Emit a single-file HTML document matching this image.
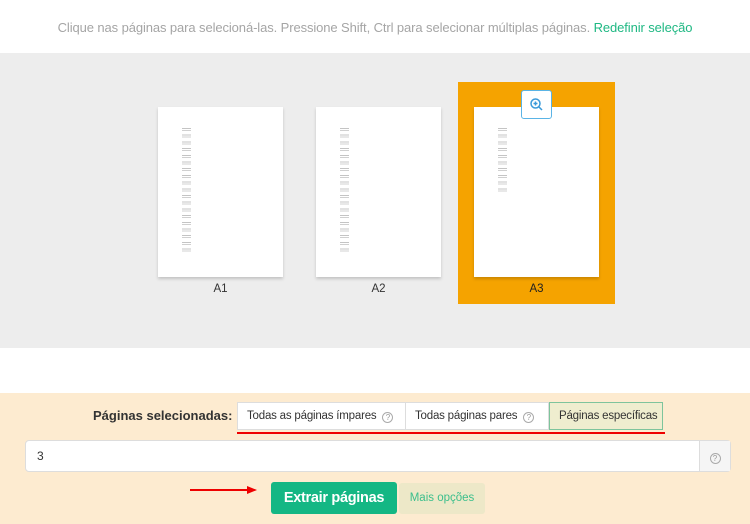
<!DOCTYPE html>
<html><head><meta charset="utf-8"><style>
*{margin:0;padding:0;box-sizing:border-box}
body{width:750px;height:524px;overflow:hidden;background:#fff;font-family:"Liberation Sans",sans-serif;position:relative}
.top{position:absolute;left:0;top:0;width:750px;height:53px;text-align:center;line-height:56px;font-size:13px;color:#a5a5a5;letter-spacing:-0.1px}
.top span{color:#1fb883}
.gray{position:absolute;left:0;top:53px;width:750px;height:295px;background:#ededed}
.page{position:absolute;top:107px;width:125px;height:170px;background:#fff;box-shadow:0 2px 3px rgba(0,0,0,.18)}
.lines{position:absolute;left:24px;top:20px;width:9px;background:repeating-linear-gradient(#fff 0,#fff 1px,#c4c4c4 1px,#c4c4c4 2px,#fff 2px,#fff 3px,#d0d0d0 3px,#d0d0d0 4px,#fff 4px,#fff 6.7px)}
.lbl{position:absolute;top:283px;width:125px;text-align:center;font-size:11.5px;color:#333}
.sel{position:absolute;left:458px;top:82px;width:157px;height:222px;background:#f5a300}
.zoom{position:absolute;left:521px;top:90px;width:31px;height:29px;background:#fff;border:1px solid #5ab4e6;border-radius:3px}
.peach{position:absolute;left:0;top:393px;width:750px;height:131px;background:#fdebd0}
.l{position:absolute;left:93px;top:408px;font-size:13px;font-weight:bold;color:#333}
.grp{position:absolute;left:237px;top:402px;height:28px;display:flex;font-size:11.5px;color:#333;letter-spacing:-0.2px}
.grp div{height:28px;line-height:27px;background:#fff;border:1px solid #ddd;padding:0 0 0 9px;white-space:nowrap}
.q{display:inline-block;width:11px;height:11px;border:1px solid #aaa;border-radius:50%;font-size:8px;line-height:9px;text-align:center;color:#999;margin-left:6px;vertical-align:-1px;letter-spacing:0}
.red{position:absolute;left:237px;top:432px;width:428px;height:2px;background:#e00}
.inp{position:absolute;left:25px;top:440px;width:706px;height:32px;background:#fff;border:1px solid #ddd;border-radius:4px;font-size:12px;line-height:31px;padding-left:11px;color:#333}
.add{position:absolute;right:0;top:0;width:31px;height:30px;background:#f5f5f5;border-left:1px solid #ddd;text-align:center}
.btn{position:absolute;left:271px;top:482px;width:126px;height:32px;background:#14b784;border-radius:3px;color:#fff;font-weight:bold;font-size:14.5px;text-align:center;line-height:32px;letter-spacing:-0.3px}
.more{position:absolute;left:399px;top:483px;width:86px;height:31px;background:#ede8c8;border-radius:3px;color:#3bbf8c;font-size:11.5px;text-align:center;line-height:31px}
</style></head><body>
<div class="top">Clique nas páginas para selecioná-las. Pressione Shift, Ctrl para selecionar múltiplas páginas. <span>Redefinir seleção</span></div>
<div class="gray"></div>
<div class="page" style="left:158px"><div class="lines" style="height:128px"></div></div>
<div class="lbl" style="left:158px">A1</div>
<div class="page" style="left:316px"><div class="lines" style="height:128px"></div></div>
<div class="lbl" style="left:316px">A2</div>
<div class="sel"></div>
<div class="page" style="left:474px"><div class="lines" style="height:67px"></div></div>
<div class="lbl" style="left:474px;color:#222">A3</div>
<div class="zoom"><svg width="29" height="27" viewBox="0 0 29 27"><circle cx="13.5" cy="12.5" r="4.5" fill="none" stroke="#3a9ad9" stroke-width="1.5"/><path d="M11.5 12.5h4M13.5 10.5v4M17 16l3 3" stroke="#3a9ad9" stroke-width="1.5"/></svg></div>
<div class="peach"></div>
<div class="l">Páginas selecionadas:</div>
<div class="grp"><div style="width:169px">Todas as páginas ímpares<span class="q">?</span></div><div style="width:143px;border-left:none">Todas páginas pares<span class="q">?</span></div><div style="width:114px;background:#efedcf;border:1px solid #7ec49c">Páginas específicas</div></div>
<div class="red"></div>
<div class="inp">3<div class="add"><span class="q" style="margin:10px 0 0">?</span></div></div>
<svg style="position:absolute;left:189px;top:485px" width="72" height="10"><path d="M1 5H62" stroke="#e00" stroke-width="2"/><path d="M58 1L68 5L58 9Z" fill="#e00"/></svg>
<div class="btn">Extrair páginas</div>
<div class="more">Mais opções</div>
</body></html>
